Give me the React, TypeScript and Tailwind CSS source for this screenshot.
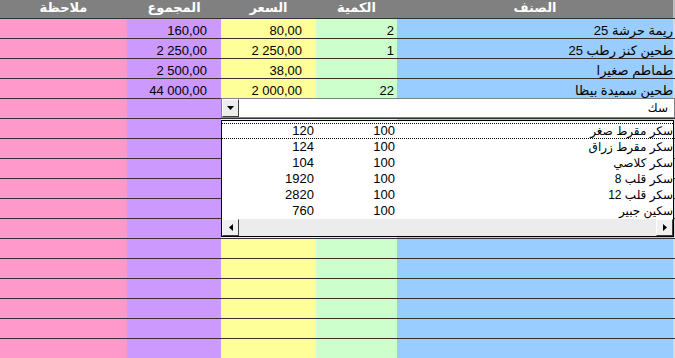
import React from "react";

const font = { fontFamily: '"Liberation Sans", "DejaVu Sans", Arial, sans-serif' };

type Row = { name: string; qty: string; price: string; total: string };

const data: Row[] = [
  { name: "ريمة حرشة 25", qty: "2", price: "80,00", total: "160,00" },
  { name: "طحين كنز رطب 25", qty: "1", price: "2 250,00", total: "2 250,00" },
  { name: "طماطم صغيرا", qty: "", price: "38,00", total: "2 500,00" },
  { name: "طحين سميدة بيظا", qty: "22", price: "2 000,00", total: "44 000,00" },
];

const list = [
  { name: "سكر مقرط صغر", q: "100", p: "120" },
  { name: "سكر مقرط زراق", q: "100", p: "124" },
  { name: "سكر كلاصي", q: "100", p: "104" },
  { name: "سكر قلب 8", q: "100", p: "1920" },
  { name: "سكر قلب 12", q: "100", p: "2820" },
  { name: "سكين جبير", q: "100", p: "760" },
];

function DataRow({ r }: { r?: Row }) {
  return (
    <div className="flex h-[20px] border-b border-[#333333] text-[13px] leading-[15px] text-black">
      <div className="w-[127px] bg-[#ff99cc]" />
      <div className="w-[94px] bg-[#cc99ff] flex items-end justify-end pr-[14px]">{r?.total}</div>
      <div className="w-[95px] bg-[#ffff99] flex items-end justify-end pr-[14px]">{r?.price}</div>
      <div className="w-[81px] bg-[#ccffcc] flex items-end justify-end pr-[3px]">{r?.qty}</div>
      <div className="w-[276px] bg-[#99ccff] flex items-end justify-end">
        <span dir="rtl">{r?.name}</span>
      </div>
      <div className="w-[2px] bg-[#d8d8d8]" />
    </div>
  );
}

export default function App() {
  const rows: (Row | undefined)[] = [...data];
  while (rows.length < 17) rows.push(undefined);
  return (
    <div className="relative w-[675px] h-[358px] overflow-hidden bg-white" style={font}>
      <div className="flex h-[19px] border-b border-[#333333] bg-[#808080] text-white font-bold text-[13px] leading-[15px]" dir="ltr">
        <div className="w-[127px] flex justify-center" dir="rtl">ملاحظة</div>
        <div className="w-[94px] flex justify-center" dir="rtl">المجموع</div>
        <div className="w-[95px] flex justify-center" dir="rtl">السعر</div>
        <div className="w-[81px] flex justify-center" dir="rtl">الكمية</div>
        <div className="w-[276px] flex justify-center" dir="rtl">الصنف</div>
        <div className="w-[2px] bg-[#bdbdbd]" />
      </div>
      {rows.map((r, i) => (
        <DataRow key={i} r={r} />
      ))}

      {/* combo box */}
      <div className="absolute left-[221px] top-[98px] w-[454px] h-[20px] bg-white border border-[#808080] flex items-stretch">
        <div className="w-[17px] bg-[#ececec] border border-t-white border-l-white border-b-[#404040] border-r-[#404040] flex items-center justify-center">
          <svg width="7" height="4" viewBox="0 0 7 4"><path d="M0 0h7L3.5 4z" fill="#000" /></svg>
        </div>
        <div className="flex-1 flex items-center justify-end pr-[6px] text-[12px] text-black">
          <span dir="rtl">سك</span>
        </div>
      </div>

      {/* dropdown list */}
      <div className="absolute left-[221px] top-[120px] w-[453px] h-[117px] bg-white border border-black flex flex-col text-[13px] leading-[16px] text-black">
        <div className="h-[2px]" />
        {list.map((it, i) => (
          <div
            key={i}
            className={
              "flex h-[16px] shrink-0 " +
              (i === 0 ? "border-t border-b border-dotted border-black leading-[14px]" : "")
            }
          >
            <div className="w-[92px] text-right">{it.p}</div>
            <div className="w-[81px] text-right">{it.q}</div>
            <div className="flex-1 text-right text-[12px]" dir="rtl">{it.name}</div>
          </div>
        ))}
        <div className="flex-1" />
        <div className="h-[17px] shrink-0 flex bg-[#ececec]">
          <div className="w-[17px] bg-[#f0f0f0] border border-t-white border-l-white border-b-[#404040] border-r-[#404040] flex items-center justify-center">
            <svg width="4" height="7" viewBox="0 0 4 7"><path d="M4 0v7L0 3.5z" fill="#000" /></svg>
          </div>
          <div className="flex-1" />
          <div className="w-[17px] bg-[#f0f0f0] border border-t-white border-l-white border-b-[#404040] border-r-[#404040] flex items-center justify-center">
            <svg width="4" height="7" viewBox="0 0 4 7"><path d="M0 0v7L4 3.5z" fill="#000" /></svg>
          </div>
        </div>
      </div>
    </div>
  );
}
